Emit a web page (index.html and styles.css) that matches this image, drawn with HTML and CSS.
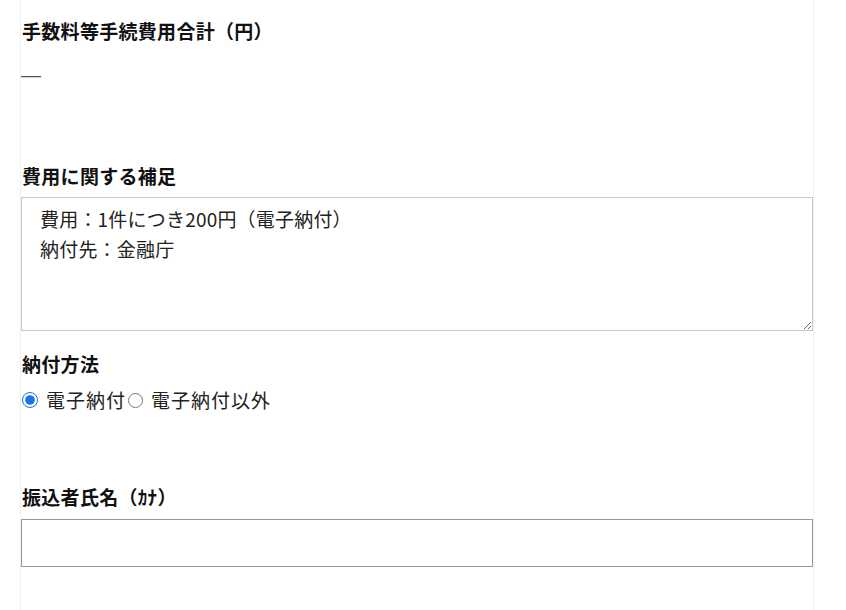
FILE: index.html
```html
<!DOCTYPE html>
<html lang="ja">
<head>
<meta charset="utf-8">
<title>手数料等</title>
<link rel="stylesheet" href="styles.css">
</head>
<body>
<div class="page">
  <section class="field field-total">
    <div class="label">手数料等手続費用合計（円）</div>
    <div class="value">—</div>
  </section>
  <section class="field field-note">
    <div class="label">費用に関する補足</div>
    <textarea class="note">費用：1件につき200円（電子納付）
納付先：金融庁</textarea>
  </section>
  <section class="field field-method">
    <div class="label">納付方法</div>
    <div class="radios">
      <label class="radio"><input type="radio" name="method" checked><span>電子納付</span></label>
      <label class="radio"><input type="radio" name="method"><span>電子納付以外</span></label>
    </div>
  </section>
  <section class="field field-name">
    <div class="label">振込者氏名（ｶﾅ）</div>
    <input class="text" type="text">
  </section>
</div>
</body>
</html>
```
FILE: styles.css
```css
html, body {
  margin: 0;
  padding: 0;
  background: #fff;
}
body {
  font-family: "Noto Sans CJK JP", "Noto Sans", sans-serif;
  color: #222;
  font-size: 19px;
}
.page {
  margin-left: 20px;
  width: 792px;
  min-height: 610px;
  border-left: 1px solid #f1f1f1;
  border-right: 1px solid #f1f1f1;
  padding-top: 17px;
  box-sizing: content-box;
}
.label {
  font-weight: bold;
  font-size: 19px;
  line-height: 28px;
  color: #111;
  padding-left: 1px;
  letter-spacing: 0.3px;
}
.value {
  margin-top: 16px;
  line-height: 28px;
  color: #555;
  font-family: "Liberation Sans", sans-serif;
  font-size: 20px;
}
.field-note {
  margin-top: 73px;
}
.note {
  display: block;
  margin-top: 7px;
  width: 792px;
  height: 134px;
  box-sizing: border-box;
  border: 1px solid #c8c8c8;
  padding: 6px 18px;
  font-family: inherit;
  font-size: 19px;
  letter-spacing: 0.2px;
  line-height: 30px;
  color: #222;
  resize: vertical;
}
.field-method {
  margin-top: 19px;
}
.radios {
  margin-top: 8px;
  display: flex;
  line-height: 28px;
  height: 28px;
  font-size: 19px;
  letter-spacing: 1px;
}
.radio {
  display: flex;
  align-items: center;
}
.radio input {
  margin: 0 8px 0 1px;
  width: 16px;
  height: 16px;
  accent-color: #1a73e8;
}
.radio + .radio input {
  margin-left: 2px;
  width: 15px;
  height: 15px;
}
.field-name {
  margin-top: 69px;
}
.text {
  display: block;
  margin-top: 8px;
  width: 792px;
  height: 48px;
  box-sizing: border-box;
  border: 1px solid #999;
  font-size: 18px;
  padding: 0 10px;
}
```
